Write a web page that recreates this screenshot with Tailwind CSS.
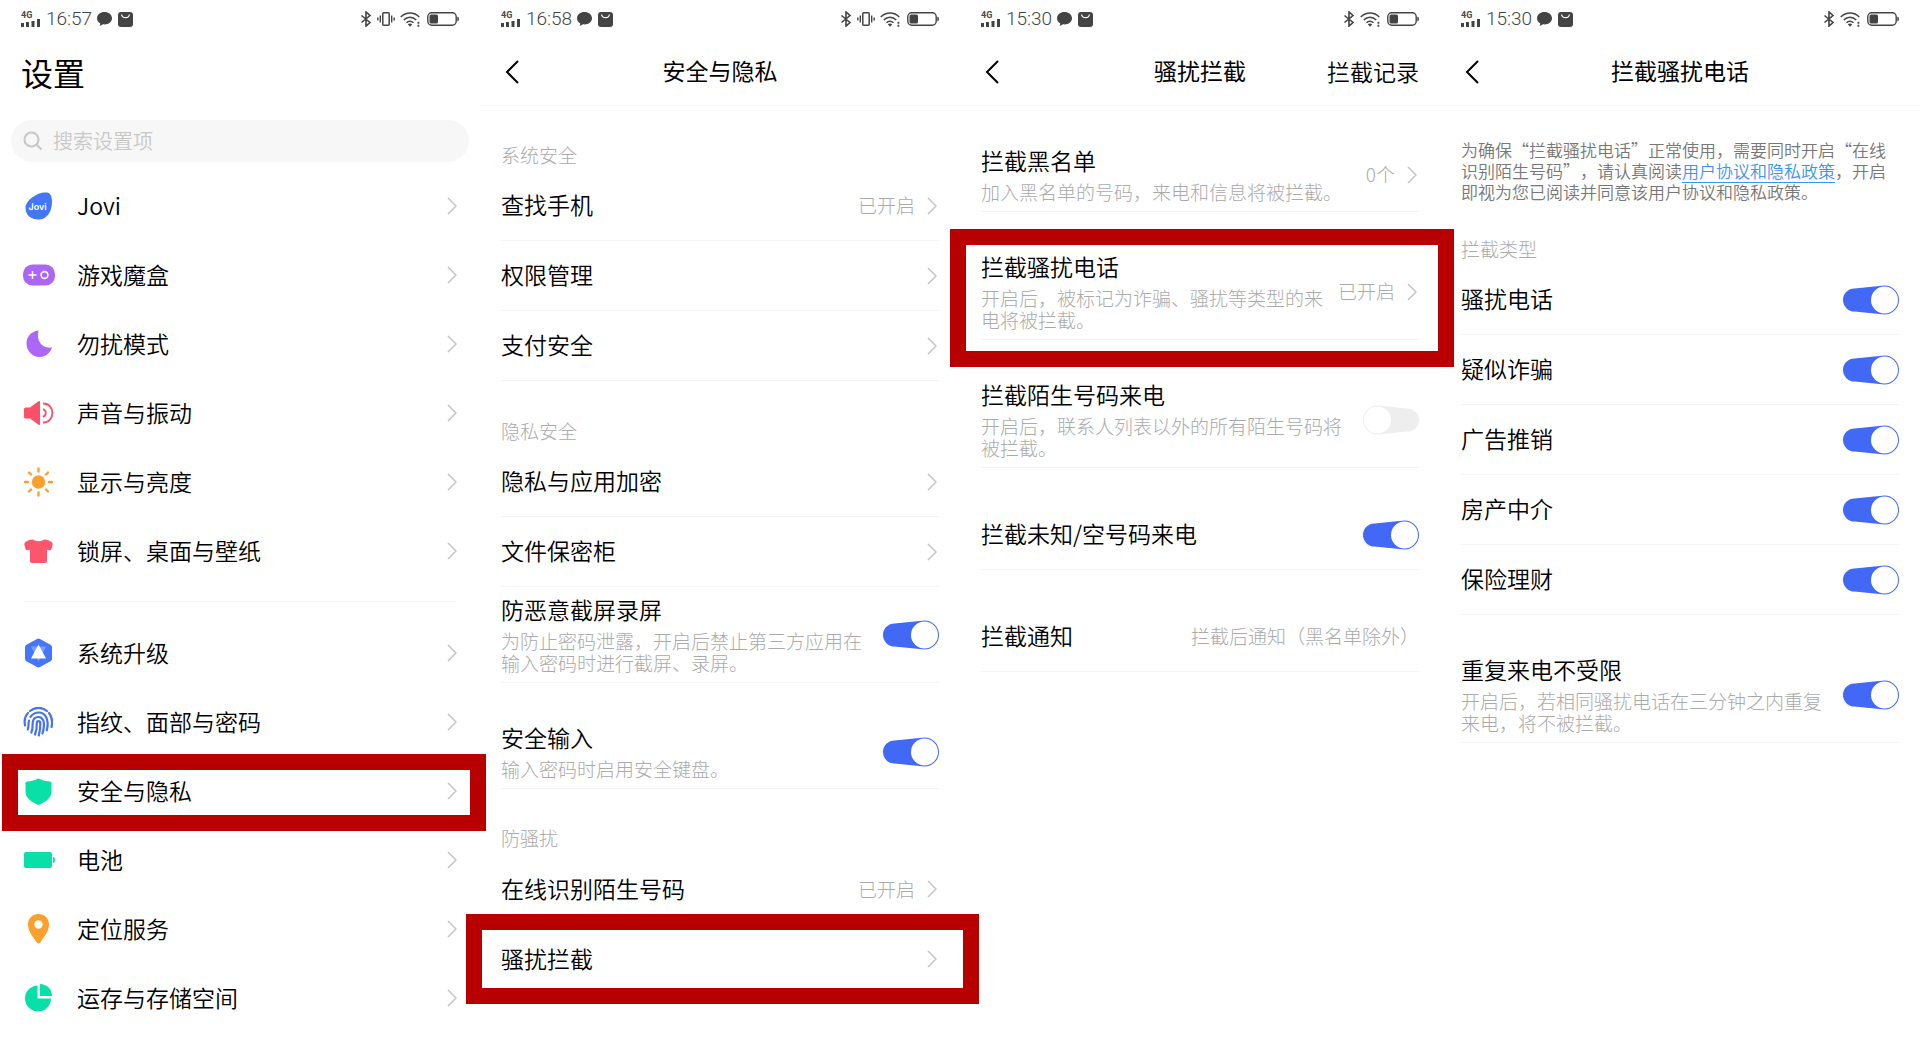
<!DOCTYPE html>
<html lang="zh-CN">
<head>
  <meta charset="UTF-8" />
  <meta name="viewport" content="width=device-width, initial-scale=1.0"/>
  <title>设置 – 骚扰拦截</title>
  <script src="https://cdn.jsdelivr.net/npm/@tailwindcss/browser@4"></script>
</head>
<body class="bg-white text-black font-[350] font-['Noto_Sans_CJK_SC',sans-serif] [text-spacing-trim:space-all]">

  <!-- shared icons -->
  <svg class="hidden" aria-hidden="true">
    <symbol id="signal" viewBox="0 0 19 8"><path d="M0 4h3v4H0zM5 3h3v5H5zM10.500 2h3v6h-3zM16 0h3v8h-3z" fill="#444"/></symbol>
    <symbol id="bubble" viewBox="0 0 15 14"><path d="M7.500 0C3.400 0 0 2.700 0 6.200c0 2.200 1.200 4 3.200 5.100L2.800 14l3.100-1.700c.5.100 1 .1 1.600.1 4.100 0 7.500-2.700 7.500-6.200S11.600 0 7.500 0z" fill="#444"/></symbol>
    <symbol id="bag" viewBox="0 0 15 15"><rect width="15" height="15" rx="3" fill="#444"/><path d="M3.500 2.500c.8 4.200 7.200 4.200 8 0" fill="none" stroke="#fff" stroke-width="1.300"/></symbol>
    <symbol id="bluetooth" viewBox="0 0 12 16"><path d="M1.500 4.500l8.500 7L6 15V1l4 3.500-8.500 7" fill="none" stroke="#444" stroke-width="1.600"/></symbol>
    <symbol id="vibrate" viewBox="0 0 18 14"><rect x="5.800" y=".8" width="6.400" height="12.400" rx="1" fill="none" stroke="#444" stroke-width="1.500"/><path d="M3.300 3.500v7M14.700 3.500v7M.8 5.500v3M17.200 5.500v3" stroke="#444" stroke-width="1.400"/></symbol>
    <symbol id="wifi" viewBox="0 0 22 15"><g fill="none" stroke="#444" stroke-width="1.500"><path d="M.8 5c5.500-5.300 13-5.300 18.400 0M3.800 8c3.600-3.700 8.800-3.700 12.400 0M6.500 10.800c2-2.200 5-2.200 7 0"/></g><path d="M7.800 12.300c1.300-1.200 3.100-1.200 4.400 0L10 14.800z" fill="#444"/><path d="M17.500 9.800h1.800v2h-1.800zM17.500 12.800h1.800v2h-1.800z" fill="#444"/></symbol>
    <symbol id="power" viewBox="0 0 32 14"><rect x=".8" y=".8" width="28.400" height="12.400" rx="4" fill="none" stroke="#444" stroke-width="1.400"/><rect x="2.500" y="2.500" width="8.500" height="9" rx="1.500" fill="#444"/><path d="M30.300 4.500q1.700.3 1.700 2.500t-1.700 2.500z" fill="#444"/></symbol>
    <symbol id="back" viewBox="0 0 14 24"><path d="M13 1L2 12l11 11" fill="none" stroke="#000" stroke-width="2"/></symbol>
    <symbol id="chevron" viewBox="0 0 10 18"><path d="M1 1l8 8-8 8" fill="none" stroke="#c4c4c4" stroke-width="1.500"/></symbol>
    <symbol id="switch-on" viewBox="0 0 56 30"><path d="M11.500 3.500L41.500.5A14.500 14.500 0 1 1 41.500 29.500L11.500 26.500A11.500 11.500 0 0 1 11.500 3.500z" fill="#4169f5"/><circle cx="41.500" cy="15" r="13.500" fill="#fff"/></symbol>
    <symbol id="switch-off" viewBox="0 0 56 30"><path d="M44.500 3.500L14.500.5A14.500 14.500 0 1 0 14.500 29.500L44.500 26.500A11.500 11.500 0 0 0 44.500 3.500z" fill="#eeeeee"/><circle cx="14.500" cy="15" r="13.500" fill="#fff"/></symbol>
  </svg>

  <main class="grid grid-cols-4 min-h-screen">

    <!-- 设置 -->
    <section>
      <div class="flex h-[38px] items-center justify-between px-[21px]">
        <div class="flex items-center">
          <div class="flex w-[19px] flex-col"><span class="font-['Roboto'] text-[9px] leading-[8px] font-bold text-[#444]">4G</span><svg class="h-2 w-[19px]"><use href="#signal"/></svg></div>
          <span class="ml-[6px] font-['Roboto'] text-[19px] font-light text-[#444]">16:57</span>
          <svg class="ml-[5px] h-[14px] w-[15px]"><use href="#bubble"/></svg>
          <svg class="ml-[6px] size-[15px]"><use href="#bag"/></svg>
        </div>
        <div class="flex items-center gap-[5px]">
          <svg class="h-4 w-3"><use href="#bluetooth"/></svg>
          <svg class="h-[14px] w-[18px]"><use href="#vibrate"/></svg>
          <svg class="h-[15px] w-[22px]"><use href="#wifi"/></svg>
          <svg class="h-[14px] w-8"><use href="#power"/></svg>
        </div>
      </div>
      <h1 class="px-[21px] pt-4 text-[32px] leading-9 font-normal">设置</h1>
      <label class="mx-[11px] mt-[30px] flex h-[42px] items-center gap-[10px] rounded-full bg-[#f7f7f7] px-3">
        <svg class="size-5 shrink-0" viewBox="0 0 20 20" fill="none" stroke="#c8c8c8" stroke-width="2.200"><circle cx="8.500" cy="8.500" r="7"/><path d="M13.500 13.500l5 5"/></svg>
        <input type="search" aria-label="搜索设置项" placeholder="搜索设置项" class="min-w-0 flex-1 bg-transparent text-xl outline-none placeholder:text-[#c8c8c8]">
      </label>
      <ul class="mt-[9px] text-[23px]">
        <li><a href="#" class="flex h-[69px] items-center px-[23px]">
          <svg class="size-[30px]" viewBox="0 0 30 30"><path d="M24 1.500c3 .3 5 3.500 5 9C29 21 24 28.500 15.500 28.500 8 28.500 2.500 24 2.500 17 2.500 9 15 .5 24 1.500z" fill="#4477f5"/><text x="5.500" y="18.500" font-size="9" font-weight="600" fill="#fff" font-family="Inter">Jovi</text></svg>
          <span class="ml-6 flex-1">Jovi</span><svg class="h-[18px] w-[10px]"><use href="#chevron"/></svg></a></li>
        <li><a href="#" class="flex h-[69px] items-center px-[23px]">
          <svg class="size-[30px] overflow-visible" viewBox="0 0 30 30"><rect y="4.500" width="32" height="21" rx="9.500" fill="#ac66f3"/><path d="M5.500 15h8M9.500 11v8" stroke="#fff" stroke-width="1.500"/><circle cx="21.500" cy="15" r="3.400" fill="none" stroke="#fff" stroke-width="1.600"/></svg>
          <span class="ml-6 flex-1">游戏魔盒</span><svg class="h-[18px] w-[10px]"><use href="#chevron"/></svg></a></li>
        <li><a href="#" class="flex h-[69px] items-center px-[23px]">
          <svg class="size-[30px]" viewBox="0 0 30 30"><path d="M15.500 1.500C8 2.200 3.500 8 3.500 14.500 3.500 22 9.500 28 16.500 28c6 0 11-4 12.500-9.700C21 20.500 12.500 13 15.500 1.500z" fill="#ac66f8"/></svg>
          <span class="ml-6 flex-1">勿扰模式</span><svg class="h-[18px] w-[10px]"><use href="#chevron"/></svg></a></li>
        <li><a href="#" class="flex h-[69px] items-center px-[23px]">
          <svg class="size-[30px] overflow-visible" viewBox="0 0 30 30"><path d="M2.500 9.500H7L15.500 3.200Q17 2.500 17 4v22q0 1.500-1.500.8L7 20.500H2.500Q1 20.500 1 19v-8Q1 9.500 2.500 9.500z" fill="#fc4f68"/><path d="M20 11.200a4 4 0 0 1 0 7.600M20 5.500c12.500-.5 12.500 19.500 0 19" fill="none" stroke="#fc4f68" stroke-width="1.800"/></svg>
          <span class="ml-6 flex-1">声音与振动</span><svg class="h-[18px] w-[10px]"><use href="#chevron"/></svg></a></li>
        <li><a href="#" class="flex h-[69px] items-center px-[23px]">
          <svg class="size-[30px]" viewBox="0 0 30 30"><circle cx="15.500" cy="15" r="6.700" fill="#fba02e"/><path d="M15.500 1.500v3M15.500 25.500v3M2 15h3M26 15h3M6 5.500l2 2M23 22.500l2 2M25 5.500l-2 2M8 22.500l-2 2" stroke="#fba02e" stroke-width="2.400" stroke-linecap="round"/></svg>
          <span class="ml-6 flex-1">显示与亮度</span><svg class="h-[18px] w-[10px]"><use href="#chevron"/></svg></a></li>
        <li><a href="#" class="flex h-[69px] items-center px-[23px]">
          <svg class="size-[30px]" viewBox="0 0 30 30"><path d="M10 3.500c2.500 2.300 8.500 2.300 11 0 3 .2 5.500 1.200 7.500 2.500q1.500 1 1.200 2.500L28.500 13q-.5 1.500-2 1.200L24 13.800V25q0 2-2 2H9q-2 0-2-2V13.800l-2.500.4q-1.500.3-2-1.200L1.300 8.500Q1 7 2.500 6C4.500 4.700 7 3.700 10 3.500z" fill="#fc566c"/></svg>
          <span class="ml-6 flex-1">锁屏、桌面与壁纸</span><svg class="h-[18px] w-[10px]"><use href="#chevron"/></svg></a></li>
      </ul>
      <hr class="mx-6 my-4 border-[#f5f5f5]">
      <ul class="text-[23px]">
        <li><a href="#" class="flex h-[69px] items-center px-[23px]">
          <svg class="size-[30px]" viewBox="0 0 30 30"><path d="M14 1q1.500-.8 3 0l10.500 5.700q1.500.8 1.500 2.500v11.600q0 1.700-1.500 2.500L17 29q-1.500.8-3 0L3.500 23.300Q2 22.500 2 20.800V9.200q0-1.700 1.500-2.500z" fill="#4477f5"/><path d="M8 8.500h15l-7.500 15z" fill="#7c9ff8"/><path d="M15.500 6.500L23 20.500H8z" fill="#fff"/></svg>
          <span class="ml-6 flex-1">系统升级</span><svg class="h-[18px] w-[10px]"><use href="#chevron"/></svg></a></li>
        <li><a href="#" class="flex h-[69px] items-center px-[23px]">
          <svg class="size-[30px]" viewBox="0 0 30 30" fill="none" stroke="#4572ee" stroke-width="2.200" stroke-linecap="round"><path d="M2 18.500C1 13 2.500 8.500 5 6M7 4C12-.2 19-.2 24 4M26 6c3 3.500 4 7.500 2.500 14"/><path d="M4.800 22.500C6 19 5 17 6 13.500M7.500 9.800c4.500-6 12.500-5.500 15.500 0 2 4 2 9 .8 13.500"/><path d="M8.300 25.500C10.500 21 9 18 10 14c1.500-5 8.500-5.500 10.300-.5 1.200 3.500.5 8.500-.8 13"/><path d="M12 27.500c1.500-4 2-7.500 1.800-11.500.2-2.500 3.200-2.500 3.500 0 .2 4.500-.3 8-1.500 12.500"/></svg>
          <span class="ml-6 flex-1">指纹、面部与密码</span><svg class="h-[18px] w-[10px]"><use href="#chevron"/></svg></a></li>
        <li class="relative"><a href="#" class="flex h-[69px] items-center px-[23px]">
          <svg class="size-[30px]" viewBox="0 0 30 30"><path d="M15.500 2.500c4 2 8 2.700 11.500 3q1.500.2 1.500 1.700V15c0 7-5 10.500-13 14-8-3.500-13-7-13-14V7.200Q2.500 5.700 4 5.500c3.500-.3 7.500-1 11.500-3z" fill="#08e0a8"/></svg>
          <span class="ml-6 flex-1">安全与隐私</span><svg class="h-[18px] w-[10px]"><use href="#chevron"/></svg></a>
          <div class="pointer-events-none absolute -top-[2px] -right-[6px] -bottom-[6px] left-[2px] z-10 border-16 border-[#b90000]"></div></li>
        <li><a href="#" class="flex h-[69px] items-center px-[23px]">
          <svg class="size-[30px] overflow-visible" viewBox="0 0 30 30"><rect x="1" y="7" width="28" height="16" rx="2" fill="#08e0a8"/><path d="M30 12q1.800.2 1.800 1.500v3q0 1.300-1.800 1.500z" fill="#08e0a8"/></svg>
          <span class="ml-6 flex-1">电池</span><svg class="h-[18px] w-[10px]"><use href="#chevron"/></svg></a></li>
        <li><a href="#" class="flex h-[69px] items-center px-[23px]">
          <svg class="size-[30px]" viewBox="0 0 30 30"><path d="M15.500 0C9.500 0 5 4.500 5 10.500c0 7 5 12 8.800 18q1.700 2.200 3.400 0C21 22.500 26 17.500 26 10.500 26 4.500 21.500 0 15.500 0z" fill="#fba02e"/><circle cx="15.500" cy="10.500" r="4.200" fill="#fff"/></svg>
          <span class="ml-6 flex-1">定位服务</span><svg class="h-[18px] w-[10px]"><use href="#chevron"/></svg></a></li>
        <li><a href="#" class="flex h-[69px] items-center px-[23px]">
          <svg class="size-[30px]" viewBox="0 0 30 30"><path d="M14.500 2.500V15.500H28A13 13 0 1 1 14.500 2.500z" fill="#08e0a8"/><path d="M17 1a12 12 0 0 1 12 12H17z" fill="#08e0a8"/></svg>
          <span class="ml-6 flex-1">运存与存储空间</span><svg class="h-[18px] w-[10px]"><use href="#chevron"/></svg></a></li>
      </ul>
    </section>

    <!-- 安全与隐私 -->
    <section>
      <div class="flex h-[38px] items-center justify-between px-[21px]">
        <div class="flex items-center">
          <div class="flex w-[19px] flex-col"><span class="font-['Roboto'] text-[9px] leading-[8px] font-bold text-[#444]">4G</span><svg class="h-2 w-[19px]"><use href="#signal"/></svg></div>
          <span class="ml-[6px] font-['Roboto'] text-[19px] font-light text-[#444]">16:58</span>
          <svg class="ml-[5px] h-[14px] w-[15px]"><use href="#bubble"/></svg>
          <svg class="ml-[6px] size-[15px]"><use href="#bag"/></svg>
        </div>
        <div class="flex items-center gap-[5px]">
          <svg class="h-4 w-3"><use href="#bluetooth"/></svg>
          <svg class="h-[14px] w-[18px]"><use href="#vibrate"/></svg>
          <svg class="h-[15px] w-[22px]"><use href="#wifi"/></svg>
          <svg class="h-[14px] w-8"><use href="#power"/></svg>
        </div>
      </div>
      <header class="grid h-[68px] grid-cols-[1fr_auto_1fr] items-center border-b border-[#f7f7f7] px-[21px] text-[23px]">
        <button type="button" aria-label="返回" class="justify-self-start px-1"><svg class="h-6 w-[14px]"><use href="#back"/></svg></button>
        <h2 class="pb-[2px] font-normal">安全与隐私</h2>
      </header>
      <h3 class="px-[21px] pt-[38px] pb-[5px] text-[19px] leading-[22px] font-light text-[#aaa]">系统安全</h3>
      <ul class="text-[23px]">
        <li class="px-[21px]"><a href="#" class="flex h-[70px] items-center border-b border-[#f5f5f5] pr-[2px]"><span class="flex-1 pb-[2px]">查找手机</span><span class="mr-3 text-[19px] font-light text-[#aaa]">已开启</span><svg class="h-[18px] w-[10px]"><use href="#chevron"/></svg></a></li>
        <li class="px-[21px]"><a href="#" class="flex h-[70px] items-center border-b border-[#f5f5f5] pr-[2px]"><span class="flex-1 pb-[2px]">权限管理</span><svg class="h-[18px] w-[10px]"><use href="#chevron"/></svg></a></li>
        <li class="px-[21px]"><a href="#" class="flex h-[70px] items-center border-b border-[#f5f5f5] pr-[2px]"><span class="flex-1 pb-[2px]">支付安全</span><svg class="h-[18px] w-[10px]"><use href="#chevron"/></svg></a></li>
      </ul>
      <h3 class="px-[21px] pt-[39px] pb-[5px] text-[19px] leading-[22px] font-light text-[#aaa]">隐私安全</h3>
      <ul class="text-[23px]">
        <li class="px-[21px]"><a href="#" class="flex h-[70px] items-center border-b border-[#f5f5f5] pr-[2px]"><span class="flex-1 pb-[2px]">隐私与应用加密</span><svg class="h-[18px] w-[10px]"><use href="#chevron"/></svg></a></li>
        <li class="px-[21px]"><a href="#" class="flex h-[70px] items-center border-b border-[#f5f5f5] pr-[2px]"><span class="flex-1 pb-[2px]">文件保密柜</span><svg class="h-[18px] w-[10px]"><use href="#chevron"/></svg></a></li>
        <li class="px-[21px]"><label class="flex items-center gap-3 border-b border-[#f5f5f5] pt-2 pb-2">
          <span class="flex-1"><span class="block leading-7">防恶意截屏录屏</span><span class="mt-[7px] block text-[19px] leading-[22px] font-light text-[#aaa]">为防止密码泄露，开启后禁止第三方应用在输入密码时进行截屏、录屏。</span></span>
          <span class="relative h-[30px] w-14"><input type="checkbox" checked class="absolute inset-0 appearance-none"><svg class="h-[30px] w-14"><use href="#switch-on"/></svg></span></label></li>
        <li class="mt-8 px-[21px]"><label class="flex items-center gap-3 border-b border-[#f5f5f5] pt-2 pb-2">
          <span class="flex-1"><span class="block leading-7">安全输入</span><span class="mt-[7px] block text-[19px] leading-[22px] font-light text-[#aaa]">输入密码时启用安全键盘。</span></span>
          <span class="relative h-[30px] w-14"><input type="checkbox" checked class="absolute inset-0 appearance-none"><svg class="h-[30px] w-14"><use href="#switch-on"/></svg></span></label></li>
      </ul>
      <h3 class="px-[21px] pt-[38px] pb-[5px] text-[19px] leading-[22px] font-light text-[#aaa]">防骚扰</h3>
      <ul class="text-[23px]">
        <li class="px-[21px]"><a href="#" class="flex h-[70px] items-center pr-[2px]"><span class="flex-1 pb-[2px]">在线识别陌生号码</span><span class="mr-3 text-[19px] font-light text-[#aaa]">已开启</span><svg class="h-[18px] w-[10px]"><use href="#chevron"/></svg></a></li>
        <li class="relative px-[21px]"><a href="#" class="flex h-[70px] items-center pr-[2px]"><span class="flex-1 pb-[2px]">骚扰拦截</span><svg class="h-[18px] w-[10px]"><use href="#chevron"/></svg></a>
          <div class="pointer-events-none absolute -top-[10px] -right-[19px] -bottom-[10px] -left-[14px] z-10 border-16 border-[#b90000]"></div></li>
      </ul>
    </section>

    <!-- 骚扰拦截 -->
    <section>
      <div class="flex h-[38px] items-center justify-between px-[21px]">
        <div class="flex items-center">
          <div class="flex w-[19px] flex-col"><span class="font-['Roboto'] text-[9px] leading-[8px] font-bold text-[#444]">4G</span><svg class="h-2 w-[19px]"><use href="#signal"/></svg></div>
          <span class="ml-[6px] font-['Roboto'] text-[19px] font-light text-[#444]">15:30</span>
          <svg class="ml-[5px] h-[14px] w-[15px]"><use href="#bubble"/></svg>
          <svg class="ml-[6px] size-[15px]"><use href="#bag"/></svg>
        </div>
        <div class="flex items-center gap-[5px]">
          <svg class="h-4 w-3"><use href="#bluetooth"/></svg>
          <svg class="h-[15px] w-[22px]"><use href="#wifi"/></svg>
          <svg class="h-[14px] w-8"><use href="#power"/></svg>
        </div>
      </div>
      <header class="grid h-[68px] grid-cols-[1fr_auto_1fr] items-center border-b border-[#f7f7f7] px-[21px] text-[23px]">
        <button type="button" aria-label="返回" class="justify-self-start px-1"><svg class="h-6 w-[14px]"><use href="#back"/></svg></button>
        <h2 class="pb-[2px] font-normal">骚扰拦截</h2>
        <a href="#" class="justify-self-end">拦截记录</a>
      </header>
      <ul class="text-[23px]">
        <li class="mt-8 px-[21px]"><a href="#" class="flex items-center border-b border-[#f5f5f5] pt-2 pr-[2px] pb-2">
          <span class="flex-1"><span class="block leading-7">拦截黑名单</span><span class="mt-[7px] block text-[19px] leading-[22px] font-light text-[#aaa]">加入黑名单的号码，来电和信息将被拦截。</span></span>
          <span class="mx-3 shrink-0 text-[19px] font-light text-[#aaa]">0个</span><svg class="h-[18px] w-[10px] shrink-0"><use href="#chevron"/></svg></a></li>
        <li class="relative mt-8 px-[21px]"><a href="#" class="flex items-center border-b border-[#f5f5f5] pt-2 pr-[2px] pb-2">
          <span class="flex-1"><span class="block leading-7">拦截骚扰电话</span><span class="mt-[7px] block text-[19px] leading-[22px] font-light text-[#aaa]">开启后，被标记为诈骗、骚扰等类型的来电将被拦截。</span></span>
          <span class="mx-3 shrink-0 text-[19px] font-light text-[#aaa]">已开启</span><svg class="h-[18px] w-[10px] shrink-0"><use href="#chevron"/></svg></a>
          <div class="pointer-events-none absolute -top-[15px] -right-[14px] -bottom-[27px] -left-[10px] z-10 border-16 border-[#b90000]"></div></li>
        <li class="mt-8 px-[21px]"><label class="flex items-center gap-3 border-b border-[#f5f5f5] pt-2 pb-2">
          <span class="flex-1"><span class="block leading-7">拦截陌生号码来电</span><span class="mt-[7px] block text-[19px] leading-[22px] font-light text-[#aaa]">开启后，联系人列表以外的所有陌生号码将被拦截。</span></span>
          <span class="relative h-[30px] w-14"><input type="checkbox" class="absolute inset-0 appearance-none"><svg class="h-[30px] w-14"><use href="#switch-off"/></svg></span></label></li>
        <li class="mt-8 px-[21px]"><label class="flex h-[70px] items-center border-b border-[#f5f5f5]"><span class="flex-1 pb-[2px]">拦截未知/空号码来电</span>
          <span class="relative h-[30px] w-14"><input type="checkbox" checked class="absolute inset-0 appearance-none"><svg class="h-[30px] w-14"><use href="#switch-on"/></svg></span></label></li>
        <li class="mt-8 px-[21px]"><a href="#" class="flex h-[70px] items-center border-b border-[#f5f5f5]"><span class="flex-1 pb-[2px]">拦截通知</span><span class="text-[19px] font-light text-[#aaa]">拦截后通知（黑名单除外）</span></a></li>
      </ul>
    </section>

    <!-- 拦截骚扰电话 -->
    <section>
      <div class="flex h-[38px] items-center justify-between px-[21px]">
        <div class="flex items-center">
          <div class="flex w-[19px] flex-col"><span class="font-['Roboto'] text-[9px] leading-[8px] font-bold text-[#444]">4G</span><svg class="h-2 w-[19px]"><use href="#signal"/></svg></div>
          <span class="ml-[6px] font-['Roboto'] text-[19px] font-light text-[#444]">15:30</span>
          <svg class="ml-[5px] h-[14px] w-[15px]"><use href="#bubble"/></svg>
          <svg class="ml-[6px] size-[15px]"><use href="#bag"/></svg>
        </div>
        <div class="flex items-center gap-[5px]">
          <svg class="h-4 w-3"><use href="#bluetooth"/></svg>
          <svg class="h-[15px] w-[22px]"><use href="#wifi"/></svg>
          <svg class="h-[14px] w-8"><use href="#power"/></svg>
        </div>
      </div>
      <header class="grid h-[68px] grid-cols-[1fr_auto_1fr] items-center border-b border-[#f7f7f7] px-[21px] text-[23px]">
        <button type="button" aria-label="返回" class="justify-self-start px-1"><svg class="h-6 w-[14px]"><use href="#back"/></svg></button>
        <h2 class="pb-[2px] font-normal">拦截骚扰电话</h2>
      </header>
      <p class="px-[21px] pt-[33px] text-[17px] leading-[21px] text-[#777]">为确保“拦截骚扰电话”正常使用，需要同时开启“在线识别陌生号码”，请认真阅读<a href="#" class="inline-block leading-[21px] text-[#3a97e8] underline underline-offset-4">用户协议和隐私政策</a>，开启即视为您已阅读并同意该用户协议和隐私政策。</p>
      <h3 class="px-[21px] pt-9 pb-[5px] text-[19px] leading-[22px] font-light text-[#aaa]">拦截类型</h3>
      <ul class="text-[23px]">
        <li class="px-[21px]"><label class="flex h-[70px] items-center border-b border-[#f5f5f5]"><span class="flex-1 pb-[2px]">骚扰电话</span>
          <span class="relative h-[30px] w-14"><input type="checkbox" checked class="absolute inset-0 appearance-none"><svg class="h-[30px] w-14"><use href="#switch-on"/></svg></span></label></li>
        <li class="px-[21px]"><label class="flex h-[70px] items-center border-b border-[#f5f5f5]"><span class="flex-1 pb-[2px]">疑似诈骗</span>
          <span class="relative h-[30px] w-14"><input type="checkbox" checked class="absolute inset-0 appearance-none"><svg class="h-[30px] w-14"><use href="#switch-on"/></svg></span></label></li>
        <li class="px-[21px]"><label class="flex h-[70px] items-center border-b border-[#f5f5f5]"><span class="flex-1 pb-[2px]">广告推销</span>
          <span class="relative h-[30px] w-14"><input type="checkbox" checked class="absolute inset-0 appearance-none"><svg class="h-[30px] w-14"><use href="#switch-on"/></svg></span></label></li>
        <li class="px-[21px]"><label class="flex h-[70px] items-center border-b border-[#f5f5f5]"><span class="flex-1 pb-[2px]">房产中介</span>
          <span class="relative h-[30px] w-14"><input type="checkbox" checked class="absolute inset-0 appearance-none"><svg class="h-[30px] w-14"><use href="#switch-on"/></svg></span></label></li>
        <li class="px-[21px]"><label class="flex h-[70px] items-center border-b border-[#f5f5f5]"><span class="flex-1 pb-[2px]">保险理财</span>
          <span class="relative h-[30px] w-14"><input type="checkbox" checked class="absolute inset-0 appearance-none"><svg class="h-[30px] w-14"><use href="#switch-on"/></svg></span></label></li>
        <li class="mt-8 px-[21px]"><label class="flex items-center gap-3 border-b border-[#f5f5f5] pt-2 pb-2">
          <span class="flex-1"><span class="block leading-7">重复来电不受限</span><span class="mt-[7px] block text-[19px] leading-[22px] font-light text-[#aaa]">开启后，若相同骚扰电话在三分钟之内重复来电，将不被拦截。</span></span>
          <span class="relative h-[30px] w-14"><input type="checkbox" checked class="absolute inset-0 appearance-none"><svg class="h-[30px] w-14"><use href="#switch-on"/></svg></span></label></li>
      </ul>
    </section>

  </main>

</body>
</html>
